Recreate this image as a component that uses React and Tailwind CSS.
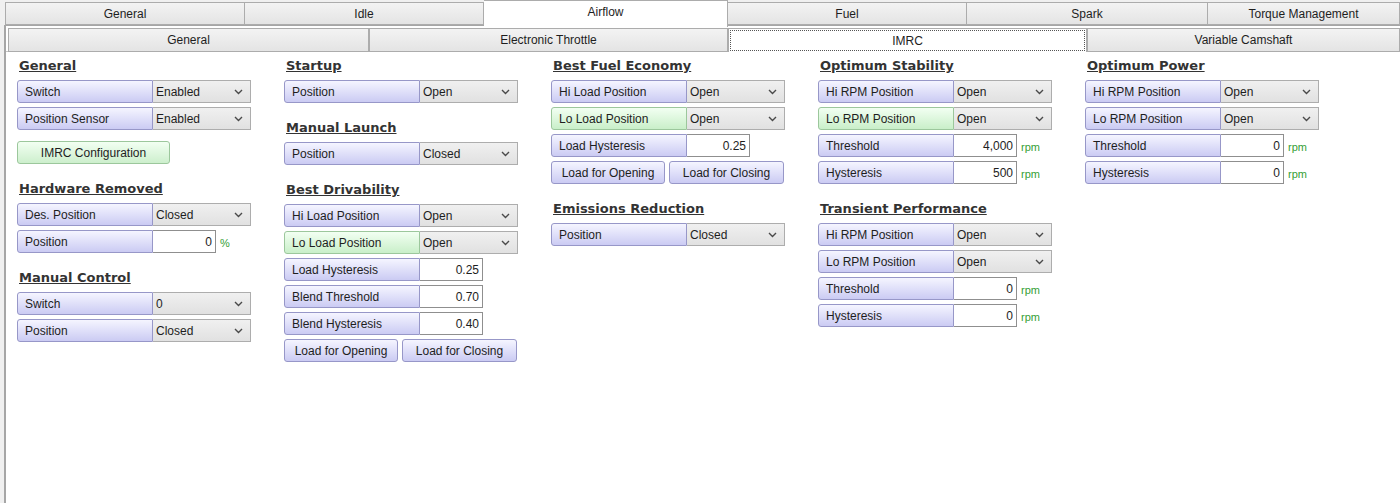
import React from 'react';

const topTabs = [
  { label: 'General', w: 'w-[240px]', first: true },
  { label: 'Idle', w: 'w-[239px]' },
  { label: 'Airflow', w: 'w-[244px]', active: true },
  { label: 'Fuel', w: 'w-[239px]' },
  { label: 'Spark', w: 'w-[241px]' },
  { label: 'Torque Management', w: 'flex-1' },
];

const subTabs = [
  { label: 'General', w: 'w-[361px]' },
  { label: 'Electronic Throttle', w: 'w-[359px]' },
  { label: 'IMRC', w: 'w-[359px]', active: true },
  { label: 'Variable Camshaft', w: 'flex-1' },
];

const Chevron = () => (
  <svg width="9" height="6" viewBox="0 0 9 6" className="shrink-0">
    <polyline points="1,1 4.5,4.5 8,1" fill="none" stroke="#4a4a4a" strokeWidth="1.4" />
  </svg>
);

const Label = ({ text, green }) => (
  <div
    className={`w-[136px] h-full flex items-center pl-[7px] rounded-l-[3px] border ${
      green
        ? 'bg-gradient-to-b from-[#f2fff2] to-[#c9efc9] border-[#9cc79c]'
        : 'bg-gradient-to-b from-[#f5f5ff] to-[#cbcbf3] border-[#9797c8]'
    }`}
  >
    {text}
  </div>
);

const SelectRow = ({ label, value, green }) => (
  <div className="flex h-[23px]">
    <Label text={label} green={green} />
    <div className="w-[98px] h-full flex items-center justify-between pl-[3px] pr-[7px] border border-l-0 border-[#adadad] bg-gradient-to-b from-[#f0f0f0] to-[#e1e1e1]">
      <span>{value}</span>
      <Chevron />
    </div>
  </div>
);

const InputRow = ({ label, value, unit }) => (
  <div className="flex h-[23px] items-center">
    <Label text={label} />
    <div className="w-[63px] h-full flex items-center justify-end pr-[3px] bg-white border border-l-0 border-[#8f8f8f]">
      {value}
    </div>
    {unit && <span className="ml-[4px] text-[11px] text-[#35a035] mt-[3px]">{unit}</span>}
  </div>
);

const Btn = ({ text, w, green }) => (
  <div
    className={`${w} h-[23px] flex items-center justify-center rounded-[3px] border ${
      green
        ? 'bg-gradient-to-b from-[#f2fff2] to-[#cdefcd] border-[#9cc79c]'
        : 'bg-gradient-to-b from-[#f5f5ff] to-[#cbcbf3] border-[#9797c8]'
    }`}
  >
    {text}
  </div>
);

const Heading = ({ text, first }) => (
  <div
    className={`h-[20px] leading-[20px] mb-[4px] pl-[2px] text-[13px] font-bold underline text-[#333] ${first ? '' : 'mt-[15px]'}`}
    style={{ fontFamily: '"DejaVu Sans", Verdana, sans-serif' }}
  >
    {text}
  </div>
);

const Stack = ({ children }) => <div className="flex flex-col gap-[4px]">{children}</div>;

const LoadButtons = () => (
  <div className="flex gap-[4px]">
    <Btn text="Load for Opening" w="w-[114px]" />
    <Btn text="Load for Closing" w="w-[115px]" />
  </div>
);

export default function App() {
  return (
    <div
      className="w-[1400px] h-[503px] overflow-hidden bg-[#f0f0f0] text-[12px] text-[#1e1e1e] flex flex-col"
      style={{ fontFamily: '"Liberation Sans", Arial, sans-serif' }}
    >
      {/* Top tabs */}
      <div className="flex h-[25px] pl-[5px] relative z-10">
        {topTabs.map((t) =>
          t.active ? (
            <div key={t.label} className={`${t.w} h-[27px] bg-white border-t border-r border-[#acacac] flex items-center justify-center pb-[4px]`}>
              {t.label}
            </div>
          ) : (
            <div
              key={t.label}
              className={`${t.w} mt-[2px] h-[23px] border-y border-r ${t.first ? 'border-l' : ''} border-[#acacac] bg-gradient-to-b from-[#f3f3f3] to-[#e4e4e4] flex items-center justify-center`}
            >
              {t.label}
            </div>
          )
        )}
      </div>

      {/* Airflow page */}
      <div className="flex-1 ml-[4px] border-t border-l-2 border-[#a6a6a6] bg-white flex flex-col">
        <div className="flex h-[26px] pt-[2px] pl-[2px] border-b border-[#c4c4c4]">
          {subTabs.map((t) =>
            t.active ? (
              <div key={t.label} className={`${t.w} h-[24px] bg-white border-x border-t border-[#acacac] p-[1px]`}>
                <div className="w-full h-full border border-dotted border-[#555] flex items-center justify-center">{t.label}</div>
              </div>
            ) : (
              <div
                key={t.label}
                className={`${t.w} h-[24px] border border-[#acacac] bg-gradient-to-b from-[#f3f3f3] to-[#e4e4e4] flex items-center justify-center`}
              >
                {t.label}
              </div>
            )
          )}
        </div>

        <div className="flex pl-[11px] pt-[4px]">
          {/* Column 1 */}
          <div className="w-[267px]">
            <Heading text="General" first />
            <Stack>
              <SelectRow label="Switch" value="Enabled" />
              <SelectRow label="Position Sensor" value="Enabled" />
            </Stack>
            <div className="mt-[11px]">
              <Btn text="IMRC Configuration" w="w-[153px]" green />
            </div>
            <Heading text="Hardware Removed" />
            <Stack>
              <SelectRow label="Des. Position" value="Closed" />
              <InputRow label="Position" value="0" unit="%" />
            </Stack>
            <Heading text="Manual Control" />
            <Stack>
              <SelectRow label="Switch" value="0" />
              <SelectRow label="Position" value="Closed" />
            </Stack>
          </div>

          {/* Column 2 */}
          <div className="w-[267px]">
            <Heading text="Startup" first />
            <Stack>
              <SelectRow label="Position" value="Open" />
            </Stack>
            <Heading text="Manual Launch" />
            <Stack>
              <SelectRow label="Position" value="Closed" />
            </Stack>
            <Heading text="Best Drivability" />
            <Stack>
              <SelectRow label="Hi Load Position" value="Open" />
              <SelectRow label="Lo Load Position" value="Open" green />
              <InputRow label="Load Hysteresis" value="0.25" />
              <InputRow label="Blend Threshold" value="0.70" />
              <InputRow label="Blend Hysteresis" value="0.40" />
              <LoadButtons />
            </Stack>
          </div>

          {/* Column 3 */}
          <div className="w-[267px]">
            <Heading text="Best Fuel Economy" first />
            <Stack>
              <SelectRow label="Hi Load Position" value="Open" />
              <SelectRow label="Lo Load Position" value="Open" green />
              <InputRow label="Load Hysteresis" value="0.25" />
              <LoadButtons />
            </Stack>
            <Heading text="Emissions Reduction" />
            <Stack>
              <SelectRow label="Position" value="Closed" />
            </Stack>
          </div>

          {/* Column 4 */}
          <div className="w-[267px]">
            <Heading text="Optimum Stability" first />
            <Stack>
              <SelectRow label="Hi RPM Position" value="Open" />
              <SelectRow label="Lo RPM Position" value="Open" green />
              <InputRow label="Threshold" value="4,000" unit="rpm" />
              <InputRow label="Hysteresis" value="500" unit="rpm" />
            </Stack>
            <Heading text="Transient Performance" />
            <Stack>
              <SelectRow label="Hi RPM Position" value="Open" />
              <SelectRow label="Lo RPM Position" value="Open" />
              <InputRow label="Threshold" value="0" unit="rpm" />
              <InputRow label="Hysteresis" value="0" unit="rpm" />
            </Stack>
          </div>

          {/* Column 5 */}
          <div className="w-[267px]">
            <Heading text="Optimum Power" first />
            <Stack>
              <SelectRow label="Hi RPM Position" value="Open" />
              <SelectRow label="Lo RPM Position" value="Open" />
              <InputRow label="Threshold" value="0" unit="rpm" />
              <InputRow label="Hysteresis" value="0" unit="rpm" />
            </Stack>
          </div>
        </div>
      </div>
    </div>
  );
}
